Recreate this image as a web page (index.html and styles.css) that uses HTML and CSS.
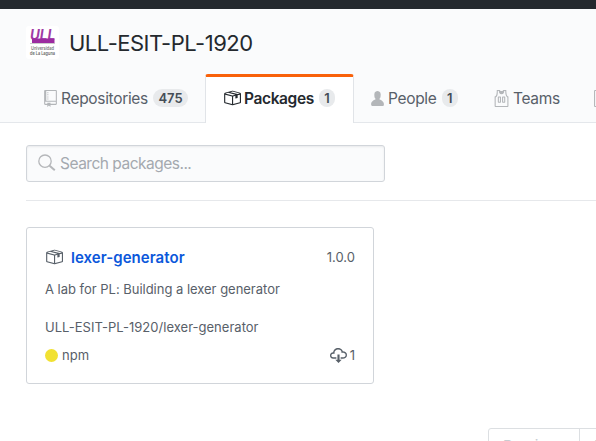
FILE: index.html
```html
<!DOCTYPE html>
<html lang="en">
<head>
<meta charset="utf-8">
<title>ULL-ESIT-PL-1920 packages</title>
<link rel="stylesheet" href="styles.css">
</head>
<body>
<svg width="0" height="0" class="defs" aria-hidden="true">
  <symbol id="package" viewBox="0 0 16 16"><path fill-rule="evenodd" d="M1 4.27v7.47c0 .45.3.84.75.97l6.5 1.73c.16.05.34.05.5 0l6.5-1.73c.45-.13.75-.52.75-.97V4.27c0-.45-.3-.84-.75-.97l-6.5-1.74a1.4 1.4 0 0 0-.5 0L1.75 3.3c-.45.13-.75.52-.75.97zm7 9.09l-6-1.59V5l6 1.61v6.75zM2 4l2.5-.67L11 5.06l-2.5.67L2 4zm13 7.77l-6 1.59V6.61l2-.55V8.5l2-.53V5.53L15 5v6.77zm-2-7.24L6.5 2.8l2-.53L15 4l-2 .53z"/></symbol>
  <symbol id="repo" viewBox="0 0 12 16"><path fill-rule="evenodd" d="M4 9H3V8h1v1zm0-3H3v1h1V6zm0-2H3v1h1V4zm0-2H3v1h1V2zm8-1v12c0 .55-.45 1-1 1H6v2l-1.500-1.500L3 16v-2H1c-.55 0-1-.45-1-1V1c0-.55.45-1 1-1h10c.55 0 1 .45 1 1zm-1 10H1v2h2v-1h3v1h5v-2zm0-10H2v9h9V1z"/></symbol>
</svg>
<div class="topbar"></div>
<header class="orghead">
  <div class="org">
    <svg class="avatar" viewBox="0 0 33 33">
      <rect width="33" height="33" rx="3" fill="#fff"/>
      <text x="4" y="14" font-size="15" font-weight="700" font-style="italic" textLength="25" lengthAdjust="spacingAndGlyphs" fill="#a03aa5">ULL</text>
      <path d="M6 12.500h22.500v4.500H6z" fill="#9c2ba0"/>
      <path d="M4 17.500h25" stroke="#aaa" stroke-width=".6"/>
      <text x="5" y="24" font-size="4.500" font-weight="600" textLength="23" lengthAdjust="spacingAndGlyphs" fill="#777">Universidad</text>
      <text x="4" y="29" font-size="4.500" font-weight="600" textLength="25" lengthAdjust="spacingAndGlyphs" fill="#666">de La Laguna</text>
    </svg>
    <h1>ULL-ESIT-PL-1920</h1>
  </div>
  <nav class="tabs">
    <a class="tab repos"><svg class="i-repo"><use href="#repo"/></svg><span class="label">Repositories</span><span class="count">475</span></a>
    <a class="tab active"><svg class="i-pack"><use href="#package"/></svg><span class="label">Packages</span><span class="count">1</span></a>
    <a class="tab people"><svg class="i-repo" viewBox="0 0 12 16"><path d="M12 14.002a.998.998 0 0 1-.998.998H1.001A1 1 0 0 1 0 13.999V13c0-2.633 4-4 4-4s.229-.409 0-1c-.841-.62-.944-1.590-1-4 .173-2.413 1.867-3 3-3s2.827.586 3 3c-.056 2.410-.159 3.380-1 4-.229.590 0 1 0 1s4 1.367 4 4v1.002z"/></svg><span class="label">People</span><span class="count">1</span></a>
    <a class="tab teams"><svg class="i-team" viewBox="0 0 14 16"><path fill-rule="evenodd" d="M4.500 6l-.5.5v5l.5.5h2l.5-.5v-5L6.500 6h-2zM6 11H5V7h1v4zm6.270-7.250C12.050 2.370 11.960 1.120 12 0H9.020c0 .27-.13.48-.39.69-.25.2-.63.3-1.130.3-.5 0-.88-.09-1.130-.3-.23-.2-.36-.42-.36-.69H3c.05 1.130-.03 2.380-.25 3.750C2.550 5.130 1.950 5.880 1 6v9c.02.27.11.48.31.69.2.21.42.3.69.31h11c.27-.02.48-.11.69-.31.21-.2.3-.42.31-.69V6c-.95-.13-1.530-.88-1.750-2.250h.02zM13 15H2V7c.89-.5 1.480-1.250 1.720-2.250S4.030 2.500 4 1h1c-.02.78.16 1.470.52 2.060.36.58 1.020.89 2 .94.98-.02 1.640-.33 2-.94.36-.59.5-1.280.48-2.060h1c.02 1.420.13 2.550.33 3.390.2.84.77 1.780 1.670 2.610v8zM8.500 6l-.5.5v5l.5.5h2l.5-.5v-5l-.5-.5h-2zm1.500 5H9V7h1v4z"/></svg><span class="label">Teams</span></a>
    <a class="tab"><svg class="i-project" viewBox="0 0 15 16"><path fill-rule="evenodd" d="M10 12h3V2h-3v10zm-4-2h3V2H6v8zm-4 4h3V2H2v12zm-1 1h13V1H1v14zM14 0H1a1 1 0 0 0-1 1v14a1 1 0 0 0 1 1h13a1 1 0 0 0 1-1V1a1 1 0 0 0-1-1z"/></svg></a>
  </nav>
</header>
<main>
  <div class="search"><svg class="i-search" viewBox="0 0 18 18"><circle cx="7" cy="7.200" r="6.200" stroke-width="1.300"/><path d="M11.600 11.800l5.200 4.500" stroke-width="2"/></svg><span class="placeholder">Search packages...</span></div>
  <hr>
  <article class="card">
    <div class="row title"><svg class="i-pack"><use href="#package"/></svg><a class="name">lexer-generator</a><span class="version">1.0.0</span></div>
    <p class="desc">A lab for PL: Building a lexer generator</p>
    <p class="path">ULL-ESIT-PL-1920/lexer-generator</p>
    <div class="row meta"><i class="dot"></i><span class="npm">npm</span><svg class="i-cloud" viewBox="0 0 16 16"><path fill-rule="evenodd" d="M9 12h2l-3 3-3-3h2V7h2v5zm3-8c0-.44-.91-3-4.500-3C5.080 1 3 2.920 3 5 1.020 5 0 6.520 0 8c0 1.530 1 3 3 3h3V9.700H3C1.380 9.700 1.300 8.280 1.300 8c0-.17.05-1.700 1.700-1.700h1.300V5c0-1.390 1.560-2.700 3.200-2.700 2.550 0 3.130 1.550 3.200 1.800v1.200H12c.81 0 2.700.22 2.700 2.200 0 2.090-2.250 2.200-2.700 2.200h-2V11h2c2.080 0 4-1.160 4-3.500C16 5.060 14.080 4 12 4z"/></svg><span class="downloads">1</span></div>
  </article>
  <div class="pager"><span>Previous</span><span>Next</span></div>
</main>
</body>
</html>
```
FILE: styles.css
```css
* { box-sizing: border-box; }
body { margin: 0; height: 441px; overflow: hidden; background: #fff; color: #586069; font-family: Inter, "Liberation Sans", sans-serif; font-size: 13px; }
svg { display: block; flex: none; fill: currentColor; }
.defs { display: none; }
.topbar { height: 9px; background: #24292e; }
.orghead { height: 114px; padding-top: 16px; background: #fafbfc; border-bottom: 1px solid #e4e7eb; }
.org { display: flex; align-items: center; height: 34px; padding-left: 26px; }
.avatar { width: 33px; height: 33px; }
h1 { margin: 2px 0 0 10px; font-size: 22px; line-height: 30px; font-weight: 400; letter-spacing: -.5px; color: #24292e; white-space: nowrap; }
.tabs { display: flex; margin-top: 15px; height: 49px; padding-left: 26px; width: 100%; overflow: hidden; }
.tab { display: flex; align-items: center; flex: none; height: 49px; padding: 3px 17px 4px; border: 0 solid #e1e4e8; font-size: 15.500px; color: #586069; white-space: nowrap; }
.tab svg { color: #b3b6b9; }
.tab .label { margin-left: 4px; letter-spacing: -.32px; }
.repos { width: 179px; padding-right: 0; padding-left: 18px; }
.tab.active { width: 149px; padding: 0 0 4px 17px; border-width: 3px 1px 0; border-top-color: #f9610a; border-radius: 3px 3px 0 0; background: #fff; color: #24292e; font-weight: 600; }
.tab.active .label { margin-left: 3px; letter-spacing: -.38px; }
.tab.active svg { color: #24292e; }
.people { width: 122px; padding-right: 0; }
.teams { width: 101px; padding-right: 0; }
.count { margin-left: 5px; height: 18px; padding: 0 5.500px; border-radius: 9px; background: #e8eaec; font-size: 13px; line-height: 18px; font-weight: 600; color: #444d56; }
.i-repo { width: 13px; height: 17px; }
.i-pack { width: 18px; height: 18px; }
.i-team { width: 16px; height: 17px; }
.i-project { width: 16px; height: 17px; }
main { padding: 22px 0 0 26px; }
.search { display: flex; align-items: center; width: 359px; height: 37px; padding: 0 0 1px 11px; border: 1px solid #d1d5da; border-radius: 3px; background: #fafbfc; box-shadow: inset 0 1px 2px rgba(27,31,35,.075); }
.i-search { width: 18px; height: 18px; color: #b5b7ba; fill: none; stroke: currentColor; }
.placeholder { margin-left: 4px; font-size: 15.500px; letter-spacing: -.5px; color: #a4a9af; }
hr { height: 1px; margin: 18px 0 26px; border: 0; background: #e6e8eb; }
.card { width: 348px; height: 157px; padding: 19px 18px 0; border: 1px solid #d1d5da; border-radius: 3px; }
.row { display: flex; align-items: center; height: 20px; }
.name { margin-left: 8px; font-size: 15px; font-weight: 600; letter-spacing: .05px; color: #0b57db; }
.version { margin-left: auto; }
p { margin: 0; line-height: 18px; white-space: nowrap; }
.desc { margin-top: 13px; letter-spacing: -.02px; }
.path { margin-top: 20px; letter-spacing: .02px; }
.meta { margin-top: 9px; }
.dot { width: 13px; height: 13px; border-radius: 50%; background: #f1e132; }
.npm { margin-left: 4px; }
.i-cloud { width: 17px; height: 17px; margin: 0 0 0 auto; }
.downloads { margin-left: 3px; }
.pager { display: flex; width: 180px; margin: 44px 0 0 462px; border: 1px solid #dcdfe2; border-radius: 3px; }
.pager span { flex: none; width: 91px; height: 36px; padding: 8px 14px; font-size: 15px; line-height: 18px; color: #c8ccd1; border-right: 1px solid #dcdfe2; }
```
